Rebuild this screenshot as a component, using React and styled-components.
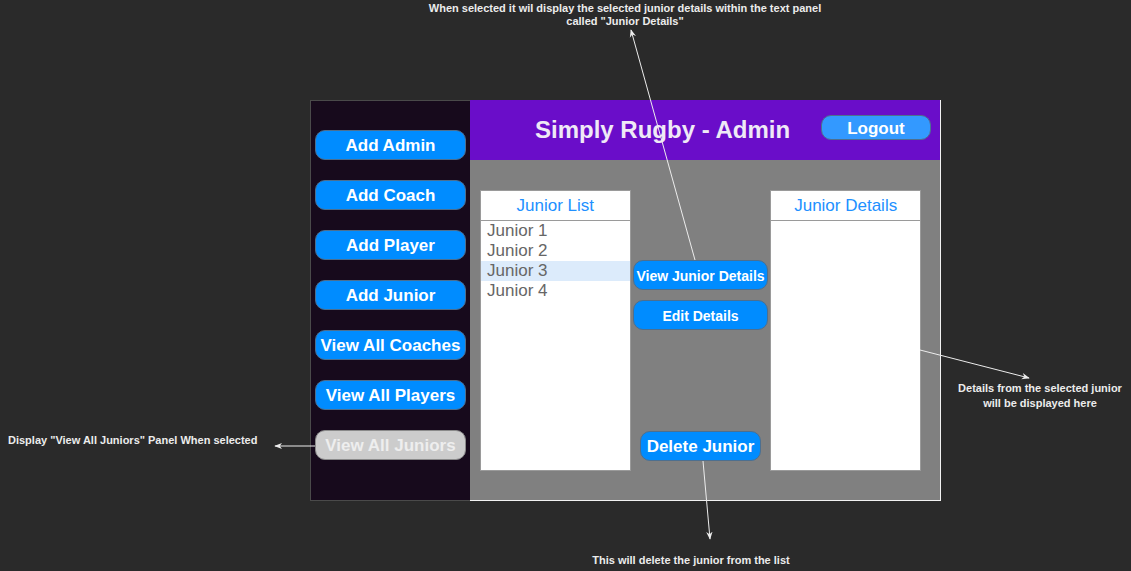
import React from 'react';
import styled, { createGlobalStyle } from 'styled-components';

const GlobalStyle = createGlobalStyle`
  body {
    margin: 0;
    background: #2a2a2a;
    font-family: "Liberation Sans", Arial, sans-serif;
  }
`;

const Canvas = styled.div`
  position: relative;
  width: 1131px;
  height: 571px;
  padding: 100px 0 0 310px;
  box-sizing: border-box;
  overflow: hidden;
`;

const Frame = styled.div`
  display: flex;
  width: 631px;
  height: 401px;
`;

const Sidebar = styled.div`
  width: 160px;
  box-sizing: border-box;
  background: #170a1c;
  border: 1px solid #4a4a4a;
  border-right: none;
  padding: 29px 4px 0 4px;
  display: flex;
  flex-direction: column;
  gap: 20px;
`;

const Pill = styled.button`
  box-sizing: border-box;
  width: ${p => p.$w || 151}px;
  height: ${p => p.$h || 30}px;
  border-radius: 10px;
  border: 1px solid ${p => (p.$muted ? '#8a8a8a' : '#4d6f8f')};
  background: ${p => (p.$muted ? '#cccccc' : p.$light ? '#3399ff' : '#008cff')};
  color: ${p => (p.$muted ? '#eeeeee' : '#ffffff')};
  font-family: "Liberation Sans", Arial, sans-serif;
  font-weight: bold;
  font-size: ${p => p.$size || 17}px;
  padding: 2px 0 0;
  white-space: nowrap;
  display: flex;
  align-items: center;
  justify-content: center;
`;

const Main = styled.div`
  width: 471px;
  display: flex;
  flex-direction: column;
  border-right: 1px solid #f2f2f2;
  border-bottom: 1px solid #f2f2f2;
  box-sizing: border-box;
`;

const Header = styled.div`
  height: 60px;
  background: #6a0dc9;
  display: flex;
  align-items: center;
  padding: 0 9px 0 65px;
`;

const Title = styled.h1`
  margin: 0;
  font-size: 24px;
  font-weight: bold;
  color: #efe9f6;
`;

const LogoutSlot = styled.div`
  margin-left: auto;
  margin-bottom: 5px;
`;

const Body = styled.div`
  flex: 1;
  background: #808080;
  display: flex;
  padding: 30px 19px 29px 10px;
`;

const Panel = styled.div`
  width: 151px;
  background: #ffffff;
  border: 1px solid #9a9a9a;
  box-sizing: border-box;
  display: flex;
  flex-direction: column;
`;

const PanelHead = styled.div`
  height: 30px;
  border-bottom: 1px solid #9a9a9a;
  display: flex;
  align-items: center;
  justify-content: center;
  color: #2190ff;
  font-size: 17px;
  padding-top: 1px;
  box-sizing: border-box;
`;

const Item = styled.div`
  height: 20px;
  line-height: 20px;
  padding-left: 6px;
  font-size: 17px;
  color: #666666;
  background: ${p => (p.$selected ? '#dcebfb' : 'transparent')};
`;

const Middle = styled.div`
  width: 140px;
  display: flex;
  flex-direction: column;
  align-items: center;
  padding: 70px 0 10px;
  gap: 10px;
`;

const Bottom = styled.div`
  margin-top: auto;
`;

const Note = styled.div`
  position: absolute;
  color: #ececec;
  font-size: 11px;
  font-weight: bold;
  line-height: 13px;
  text-align: center;
  white-space: nowrap;
`;

const Arrows = styled.svg`
  position: absolute;
  left: 0;
  top: 0;
  pointer-events: none;
`;

const juniors = ['Junior 1', 'Junior 2', 'Junior 3', 'Junior 4'];
const navItems = ['Add Admin', 'Add Coach', 'Add Player', 'Add Junior', 'View All Coaches', 'View All Players'];

export default function App() {
  return (
    <>
      <GlobalStyle />
      <Canvas>
        <Frame>
          <Sidebar>
            {navItems.map(label => (
              <Pill key={label}>{label}</Pill>
            ))}
            <Pill $muted>View All Juniors</Pill>
          </Sidebar>
          <Main>
            <Header>
              <Title>Simply Rugby - Admin</Title>
              <LogoutSlot>
                <Pill $light $w={110} $h={25}>Logout</Pill>
              </LogoutSlot>
            </Header>
            <Body>
              <Panel>
                <PanelHead>Junior List</PanelHead>
                {juniors.map((j, i) => (
                  <Item key={j} $selected={i === 2}>{j}</Item>
                ))}
              </Panel>
              <Middle>
                <Pill $w={135} $size={14}>View Junior Details</Pill>
                <Pill $w={135} $size={14}>Edit Details</Pill>
                <Bottom>
                  <Pill $w={121}>Delete Junior</Pill>
                </Bottom>
              </Middle>
              <Panel>
                <PanelHead>Junior Details</PanelHead>
              </Panel>
            </Body>
          </Main>
        </Frame>

        <Note style={{ left: 425, top: 2, width: 400 }}>
          When selected it wil display the selected junior details within the text panel
          <br />
          called "Junior Details"
        </Note>
        <Note style={{ left: 940, top: 381, width: 200, lineHeight: '15px' }}>
          Details from the selected junior
          <br />
          will be displayed here
        </Note>
        <Note style={{ left: 8, top: 434, textAlign: 'left' }}>
          Display "View All Juniors" Panel When selected
        </Note>
        <Note style={{ left: 591, top: 554, width: 200 }}>
          This will delete the junior from the list
        </Note>

        <Arrows width="1131" height="571">
          <defs>
            <marker id="head" viewBox="0 0 10 10" refX="9" refY="5" markerWidth="8" markerHeight="8" orient="auto">
              <path d="M0 1 L10 5 L0 9 L3 5 Z" fill="#ececec" />
            </marker>
          </defs>
          <g stroke="#ececec" strokeWidth="1" fill="none">
            <line x1="695" y1="260" x2="631" y2="30" markerEnd="url(#head)" />
            <line x1="920" y1="350" x2="1029" y2="378" markerEnd="url(#head)" />
            <line x1="315" y1="446" x2="275" y2="446" markerEnd="url(#head)" />
            <line x1="703" y1="461" x2="710" y2="539" markerEnd="url(#head)" />
          </g>
        </Arrows>
      </Canvas>
    </>
  );
}
